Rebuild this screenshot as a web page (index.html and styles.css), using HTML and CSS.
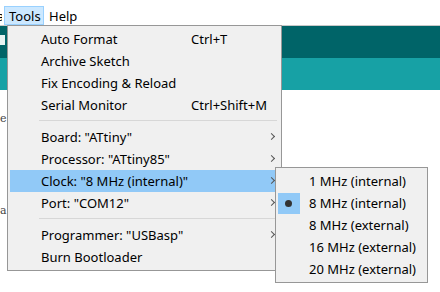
FILE: index.html
```html
<!DOCTYPE html>
<html>
<head>
  <meta charset="UTF-8">
  <title>Tools menu</title>
  <link rel="stylesheet" href="styles.css">
</head>
<body>

  <div class="window">
    <div class="menubar">
      <span class="mb-item cut">a</span>
      <span class="mb-item active">Tools</span>
      <span class="mb-item">Help</span>
    </div>
    <div class="toolbar"><span class="tb-icon"></span></div>
    <div class="tabs"></div>
    <div class="editor">
      <span class="frag f1">e</span>
      <span class="frag f2">a</span>
    </div>

    <div class="menu">
      <div class="row"><span class="label">Auto Format</span><span class="key">Ctrl+T</span></div>
      <div class="row"><span class="label">Archive Sketch</span></div>
      <div class="row"><span class="label">Fix Encoding &amp; Reload</span></div>
      <div class="row"><span class="label">Serial Monitor</span><span class="key">Ctrl+Shift+M</span></div>
      <div class="sep"></div>
      <div class="row sub"><span class="label">Board: "ATtiny"</span></div>
      <div class="row sub"><span class="label">Processor: "ATtiny85"</span></div>
      <div class="row sub hl"><span class="label">Clock: "8 MHz (internal)"</span></div>
      <div class="row sub"><span class="label">Port: "COM12"</span></div>
      <div class="sep"></div>
      <div class="row sub"><span class="label">Programmer: "USBasp"</span></div>
      <div class="row"><span class="label">Burn Bootloader</span></div>
    </div>

    <div class="submenu">
      <div class="srow"><span class="check"></span><span class="label">1 MHz (internal)</span></div>
      <div class="srow"><span class="check on"></span><span class="label">8 MHz (internal)</span></div>
      <div class="srow"><span class="check"></span><span class="label">8 MHz (external)</span></div>
      <div class="srow"><span class="check"></span><span class="label">16 MHz (external)</span></div>
      <div class="srow"><span class="check"></span><span class="label">20 MHz (external)</span></div>
    </div>
  </div>

</body>
</html>
```
FILE: styles.css
```css
body { margin: 0; background: #fff; font-family: "Noto Sans", "Noto Sans CJK SC", sans-serif; font-size: 13px; color: #000; }
.window { position: relative; width: 440px; height: 292px; overflow: hidden; }

.menubar { display: flex; align-items: flex-end; border-bottom: 1px solid #c8c8c8; box-sizing: border-box; height: 26px; }
.mb-item { height: 19px; line-height: 18px; padding: 0 4px; box-sizing: border-box; border: 1px solid transparent; }
.mb-item.cut { margin-left: -4px; padding: 0 2px 0 0; width: 7px; overflow: hidden; }
.mb-item.active { background: #cce8ff; border-color: #99d1ff; margin-left: 1px; width: 40px; }

.toolbar { height: 32px; background: #006468; position: relative; }
.tb-icon { position: absolute; left: 0; top: 9px; width: 5px; height: 10px; background: #e6f3f3; }
.tabs { height: 32px; background: #17a1a5; }
.editor { position: relative; height: 202px; }
.frag { position: absolute; left: 0; font-size: 11px; color: #444; font-family: "DejaVu Serif", serif; }
.f1 { top: 22px; }
.f2 { top: 114px; }

.menu { position: absolute; left: 7px; top: 25px; width: 275px; height: 246px; box-sizing: border-box;
  background: #f0f0f0; border: 1px solid #979797; padding: 2px 2px; }
.row { height: 22px; display: flex; align-items: center; padding-left: 31px; position: relative; }
.row .label { flex: 1; }
.row .key { position: absolute; left: 181px; }
.row.sub::after { content: ""; position: absolute; left: 259px; top: 8px; width: 4px; height: 4px;
  border-top: 1px solid #555; border-right: 1px solid #555; transform: rotate(45deg); }
.row.hl { background: #91c9f7; }
.sep { height: 10px; margin-left: 29px; margin-right: 2px; position: relative; }
.sep::before { content: ""; position: absolute; left: 0; right: 0; top: 4px; height: 1px; background: #d7d7d7; }

.submenu { position: absolute; left: 275px; top: 167px; width: 153px; height: 116px; box-sizing: border-box;
  background: #f0f0f0; border: 1px solid #979797; padding: 2px; }
.srow { height: 22px; display: flex; align-items: center; }
.check { width: 22px; height: 21px; margin-right: 9px; position: relative; }
.check.on { background: #91c9f7; }
.check.on::after { content: ""; position: absolute; left: 7px; top: 7px; width: 7px; height: 7px; border-radius: 50%; background: #333; }
```
